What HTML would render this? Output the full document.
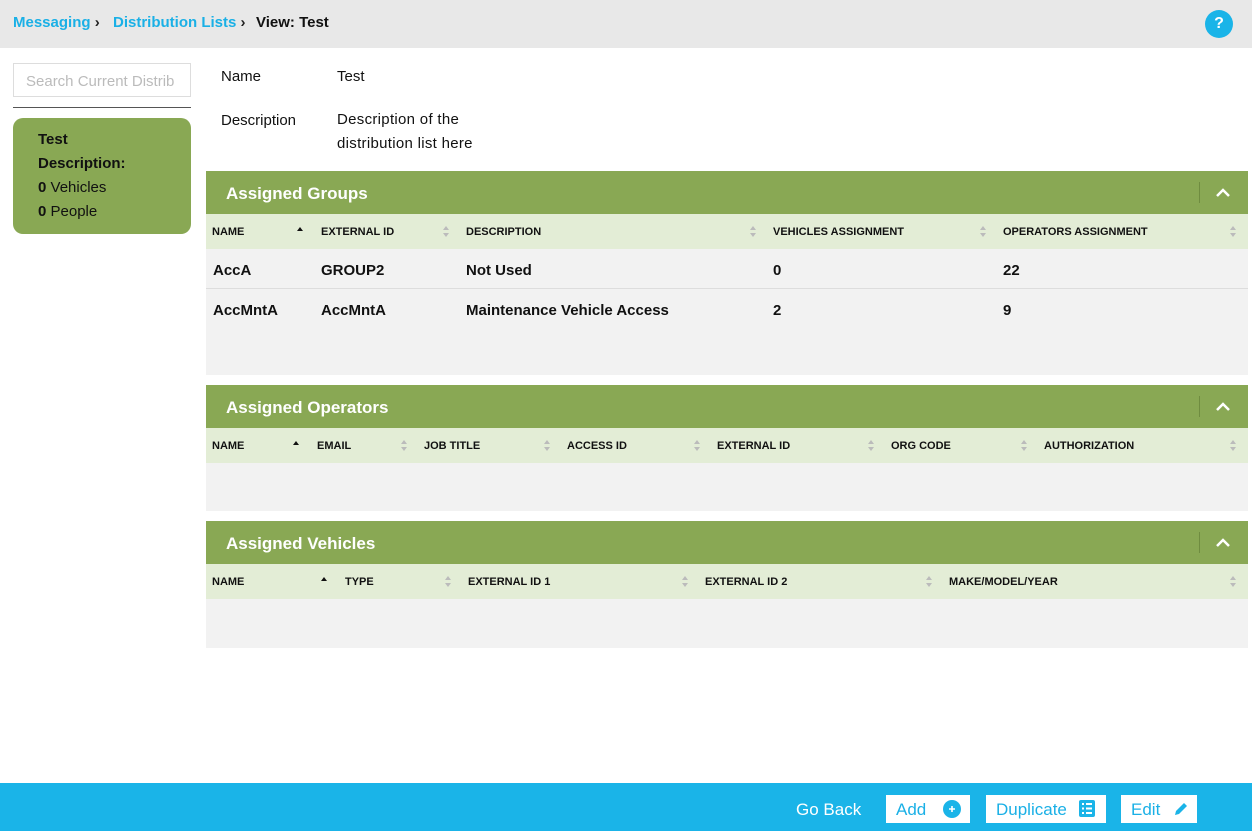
<!DOCTYPE html>
<html><head><meta charset="utf-8"><style>
*{margin:0;padding:0;box-sizing:border-box}
body{width:1252px;height:831px;position:relative;background:#fff;font-family:"Liberation Sans",sans-serif;color:#111;overflow:hidden}
.a{position:absolute;white-space:nowrap}
.top{position:absolute;left:0;top:0;width:1252px;height:48px;background:#e8e8e8}
.bc{font-size:15px;font-weight:bold;top:14px}
.blue{color:#1ab0e6}
.panel{position:absolute;left:206px;width:1042px;background:#f2f2f2}
.ph{position:absolute;left:0;top:0;width:100%;height:43px;background:#89a854;color:#fff;font-weight:bold;font-size:17px}
.ph span{position:absolute;left:20px;top:13px}
.ph i{position:absolute;right:48px;top:11px;width:1px;height:21px;background:#6f8c40}
.ph svg{position:absolute;right:17px;top:16px}
.ch{position:absolute;left:0;top:43px;width:100%;height:35px;background:#e3edd6;font-size:11px;font-weight:bold}
.ch span{position:absolute;top:12px}
.s{position:absolute;top:12px;width:7px;height:12px}
.s:before{content:"";position:absolute;left:0;top:0;border:3.5px solid transparent;border-bottom:4px solid #bbb;border-top:0}
.s:after{content:"";position:absolute;left:0;top:7px;border:3.5px solid transparent;border-top:4px solid #bbb;border-bottom:0}
.up{position:absolute;top:13px;border:3.5px solid transparent;border-bottom:4px solid #111;border-top:0}
.row{position:absolute;left:0;width:100%;height:40px;font-size:15px;font-weight:bold}
.row span{position:absolute;top:13px}
.foot{position:absolute;left:0;top:783px;width:1252px;height:48px;background:#1ab4e8}
.btn{position:absolute;top:12px;height:28px;background:#fff;color:#1ab0e6;font-size:17px}
.btn span{position:absolute;left:10px;top:5px}
</style></head><body>
<div class="top"></div>
<div class="a bc blue" style="left:13px">Messaging <span style="color:#222">›</span></div>
<div class="a bc blue" style="left:113px">Distribution Lists <span style="color:#222">›</span></div>
<div class="a bc" style="left:256px">View: Test</div>
<div class="a" style="left:1205px;top:10px;width:28px;height:28px;border-radius:50%;background:#1ab4e8;color:#fff;font-weight:bold;font-size:16px;text-align:center;line-height:28px">?</div>

<div class="a" style="left:13px;top:63px;width:178px;height:34px;border:1px solid #ddd;color:#bbb;font-size:15px;padding:9px 12px;overflow:hidden">Search Current Distrib</div>
<div class="a" style="left:13px;top:107px;width:178px;height:1px;background:#555"></div>
<div class="a" style="left:13px;top:118px;width:178px;height:116px;background:#89a854;border-radius:10px;font-size:15px;line-height:24px;padding:10px 25px">
<b>Test</b><br><b>Description:</b><br><b>0</b> Vehicles<br><b>0</b> People</div>

<div class="a" style="left:221px;top:68px;font-size:15px">Name</div>
<div class="a" style="left:337px;top:68px;font-size:15px">Test</div>
<div class="a" style="left:221px;top:112px;font-size:15px">Description</div>
<div class="a" style="left:337px;font-size:15px;line-height:24px;top:108px;letter-spacing:0.3px">Description of the<br>distribution list here</div>

<div class="panel" style="top:171px;height:204px">
<div class="ph"><span>Assigned Groups</span><i></i><svg width="16" height="12" viewBox="0 0 16 12"><path d="M2 9 L8 3 L14 9" stroke="#fff" stroke-width="2.5" fill="none"/></svg></div>
<div class="ch">
<span style="left:6px">NAME</span><b class="up" style="left:91px"></b>
<span style="left:115px">EXTERNAL ID</span><b class="s" style="left:237px"></b>
<span style="left:260px">DESCRIPTION</span><b class="s" style="left:544px"></b>
<span style="left:567px">VEHICLES ASSIGNMENT</span><b class="s" style="left:774px"></b>
<span style="left:797px">OPERATORS ASSIGNMENT</span><b class="s" style="left:1024px"></b>
</div>
<div class="row" style="top:78px;border-bottom:1px solid #ddd"><span style="left:7px">AccA</span><span style="left:115px">GROUP2</span><span style="left:260px">Not Used</span><span style="left:567px">0</span><span style="left:797px">22</span></div>
<div class="row" style="top:118px"><span style="left:7px">AccMntA</span><span style="left:115px">AccMntA</span><span style="left:260px">Maintenance Vehicle Access</span><span style="left:567px">2</span><span style="left:797px">9</span></div>
</div>

<div class="panel" style="top:385px;height:126px">
<div class="ph"><span>Assigned Operators</span><i></i><svg width="16" height="12" viewBox="0 0 16 12"><path d="M2 9 L8 3 L14 9" stroke="#fff" stroke-width="2.5" fill="none"/></svg></div>
<div class="ch">
<span style="left:6px">NAME</span><b class="up" style="left:87px"></b>
<span style="left:111px">EMAIL</span><b class="s" style="left:195px"></b>
<span style="left:218px">JOB TITLE</span><b class="s" style="left:338px"></b>
<span style="left:361px">ACCESS ID</span><b class="s" style="left:488px"></b>
<span style="left:511px">EXTERNAL ID</span><b class="s" style="left:662px"></b>
<span style="left:685px">ORG CODE</span><b class="s" style="left:815px"></b>
<span style="left:838px">AUTHORIZATION</span><b class="s" style="left:1024px"></b>
</div></div>

<div class="panel" style="top:521px;height:127px">
<div class="ph"><span>Assigned Vehicles</span><i></i><svg width="16" height="12" viewBox="0 0 16 12"><path d="M2 9 L8 3 L14 9" stroke="#fff" stroke-width="2.5" fill="none"/></svg></div>
<div class="ch">
<span style="left:6px">NAME</span><b class="up" style="left:115px"></b>
<span style="left:139px">TYPE</span><b class="s" style="left:239px"></b>
<span style="left:262px">EXTERNAL ID 1</span><b class="s" style="left:476px"></b>
<span style="left:499px">EXTERNAL ID 2</span><b class="s" style="left:720px"></b>
<span style="left:743px">MAKE/MODEL/YEAR</span><b class="s" style="left:1024px"></b>
</div></div>

<div class="foot">
<div class="a" style="left:796px;top:17px;color:#fff;font-size:17px">Go Back</div>
<div class="btn" style="left:886px;width:84px"><span>Add</span><svg class="a" style="left:57px;top:5px" width="18" height="18" viewBox="0 0 18 18"><circle cx="9" cy="9" r="9" fill="#1ab4e8"/><path d="M9 6v6M6 9h6" stroke="#fff" stroke-width="1.6"/></svg></div>
<div class="btn" style="left:986px;width:120px"><span>Duplicate</span><svg class="a" style="left:93px;top:5px" width="16" height="17" viewBox="0 0 16 17"><rect width="16" height="17" rx="2" fill="#1ab4e8"/><path d="M3 4h2M7 4h6M3 8.5h2M7 8.5h6M3 13h2M7 13h6" stroke="#fff" stroke-width="2"/></svg></div>
<div class="btn" style="left:1121px;width:76px"><span>Edit</span><svg class="a" style="left:52px;top:6px" width="16" height="16" viewBox="0 0 16 16"><path d="M2 14 L3 10 L11 2 L14 5 L6 13 Z" fill="#1ab4e8"/></svg></div>
</div>
</body></html>
